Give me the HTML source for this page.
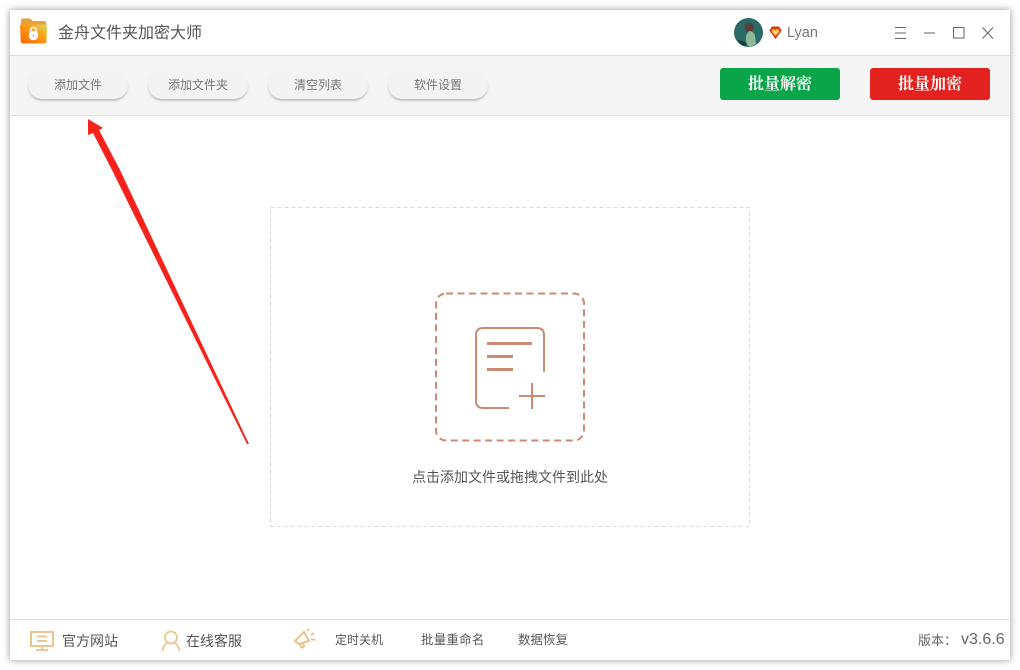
<!DOCTYPE html>
<html lang="zh"><head><meta charset="utf-8"><title>金舟文件夹加密大师</title>
<style>
html,body{margin:0;padding:0;width:1020px;height:670px;overflow:hidden;background:#fff;font-family:"Liberation Sans","Noto Sans CJK SC",sans-serif}
div,span,svg{position:absolute}
#win{left:10px;top:10px;width:1000px;height:650px;background:#fff;box-shadow:0 0 7px rgba(0,0,0,.42)}
.t{white-space:nowrap;line-height:1}
.b{width:100px;height:28px;top:71px;border-radius:14px;background:#f3f3f3;box-shadow:0 2px 2px -.5px rgba(0,0,0,.25);font-size:12px;line-height:28px;text-align:center;color:#777}
.c{top:68px;width:120px;height:32px;border-radius:3px;color:#fff;font-size:16px;font-weight:bold;line-height:34px;text-align:center;font-family:"Liberation Serif","Noto Serif CJK SC",serif}
.f{font-size:14px;color:#555}
</style></head><body>
<div id="win"></div>
<div style="left:10px;top:55px;width:1000px;height:61px;box-sizing:border-box;background:#f5f5f5;border-top:1px solid #ddd;border-bottom:1px solid #ddd"></div>
<div style="left:10px;top:619px;width:1000px;height:1px;background:#ddd"></div>

<svg style="left:19px;top:17px" width="30" height="28" viewBox="0 0 30 28"><defs><linearGradient id="g" x1="0" y1="1" x2="1" y2="0"><stop offset="0" stop-color="#f56400"/><stop offset=".6" stop-color="#fb9f18"/><stop offset="1" stop-color="#d6dc62"/></linearGradient></defs><path d="M2 4q0-2.500 2-2.500h7l3 2.500h11q2 0 2 2v4H2z" fill="#e9a03a"/><path d="M1 8.500q0-1 1-1h25q1 0 1 1l-.5 15.500q0 2.500-2.500 2.500H4q-2 0-2.300-2.500z" fill="url(#g)"/><circle cx="14.500" cy="18.500" r="4.800" fill="#fff"/><path d="M11.500 15v-1.500a3 3 0 0 1 6 0V15" fill="none" stroke="#fff" stroke-width="1.500"/><circle cx="14.500" cy="18.500" r=".9" fill="#f09020"/></svg>
<span class="t" style="left:58px;top:26px;font-size:16px;color:#555">金舟文件夹加密大师</span>

<svg style="left:734px;top:18px" width="30" height="30" viewBox="0 0 30 30"><circle cx="14.500" cy="14.500" r="14.500" fill="#2c6a68"/><path d="M11 6q5-3 8 1 2 4-1 6l-5 1q-3-4-2-8z" fill="#5a3b35"/><path d="M15 13q5 0 6 5l1 8-6 3q-3-1-4-6-1-6 3-10z" fill="#8fb79a"/><path d="M4 22q6 1 9 4l-3 2q-4-2-6-6z" fill="#16393a"/></svg>
<svg style="left:768px;top:25px" width="15" height="15" viewBox="0 0 15 15"><path d="M4 1.500h7l2.700 4-6.200 8.500-6.200-8.500z" fill="#d2380f"/><path d="M3.500 6q0-2 2-2 1.200 0 2 1 .8-1 2-1 2 0 2 2 0 1.500-4 5-4-3.500-4-5z" fill="#f9b23c"/><path d="M5.500 6q1-.5 2 .6 1-1.100 2-.6 0 1-2 2.800-2-1.800-2-2.800z" fill="#f6e7c8"/></svg>
<span class="t" style="left:787px;top:26px;font-size:14.500px;color:#777">Lyan</span>
<svg style="left:890px;top:24px" width="110" height="18" viewBox="0 0 110 18" fill="none" stroke="#666" stroke-width="1"><path d="M5 3.500h11M5 9h11M5 14.500h11M34 9h11"/><rect x="63.500" y="3.500" width="10.500" height="10.500"/><path d="M92.500 3.500l10.500 11M103 3.500L92.500 14.500"/></svg>

<div class="b" style="left:28px">添加文件</div>
<div class="b" style="left:148px">添加文件夹</div>
<div class="b" style="left:268px">清空列表</div>
<div class="b" style="left:388px">软件设置</div>
<div class="c" style="left:720px;background:#0aa548">批量解密</div>
<div class="c" style="left:870px;background:#e3221f">批量加密</div>

<svg style="left:0;top:0" width="1020" height="670"><polygon points="88,119 103,128 99,130 120,170 249,444 247,444 112,170 93,133 88,135" fill="#f5231c"/></svg>

<svg style="left:270px;top:207px" width="480" height="320"><rect x=".5" y=".5" width="479" height="319" fill="none" stroke="#d9d9d9" stroke-dasharray="4 3"/></svg>
<svg style="left:430px;top:288px" width="160" height="160" viewBox="0 0 160 160" fill="none" stroke="#cc8a72"><rect x="6" y="5.500" width="148" height="147" rx="10" stroke-width="2" stroke-dasharray="7 4.500"/><path d="M114 84V47q0-7-7-7H53q-7 0-7 7v66q0 7 7 7h26" stroke-width="2"/><path d="M57 55.500h45M57 68.500h26M57 81.500h26" stroke-width="3"/><path d="M89 108h26M102 95v26" stroke-width="2"/></svg>
<span class="t" style="left:412px;top:470px;font-size:14px;color:#555;width:196px">点击添加文件或拖拽文件到此处</span>

<svg style="left:29px;top:629px" width="26" height="23" viewBox="0 0 26 23" fill="none" stroke="#e8c690" stroke-width="2"><rect x="2" y="3" width="22" height="14"/><path d="M8 7.500h10M8 12h10M13 17v3.500M7 21h12"/></svg>
<span class="t f" style="left:62px;top:634px">官方网站</span>
<svg style="left:160px;top:629px" width="22" height="23" viewBox="0 0 22 23" fill="none" stroke="#eccb9a" stroke-width="2"><circle cx="11" cy="8.500" r="6"/><path d="M2.500 22q1-6 5-8.500M19.500 22q-1-6-5-8.500"/></svg>
<span class="t f" style="left:186px;top:634px">在线客服</span>
<svg style="left:293px;top:628px" width="24" height="22" viewBox="0 0 24 22" fill="none" stroke="#e8c690" stroke-width="2"><path d="M2 13l9-9 5 9-10 3zM7 16l1 3q2 1 3-1l-1-3M14 3l2-2M18 7l3-2M18 11l4 1"/></svg>
<span class="t f" style="left:335px;top:634px;font-size:12px">定时关机</span>
<span class="t f" style="left:421px;top:634px;font-size:12.500px;letter-spacing:.2px">批量重命名</span>
<span class="t f" style="left:518px;top:634px;font-size:12.500px">数据恢复</span>
<span class="t f" style="left:918px;top:634px;font-size:13px;color:#666">版本：</span>
<span class="t f" style="left:961px;top:632px;font-size:16px;color:#666">v3.6.6</span>
</body></html>
